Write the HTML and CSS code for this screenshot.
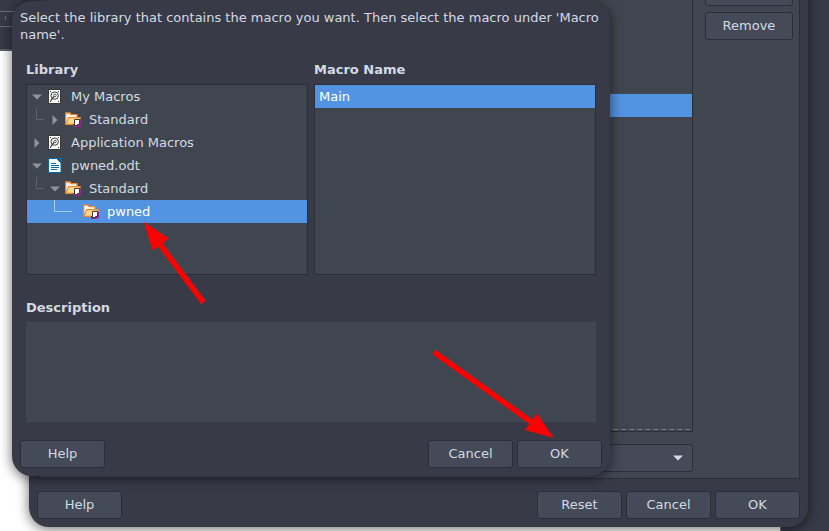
FILE: index.html
```html
<!DOCTYPE html>
<html lang="en">
<head>
<meta charset="utf-8">
<title>Macro Selector</title>
<link rel="stylesheet" href="styles.css">
</head>
<body>
<svg class="defs" aria-hidden="true">
  <symbol id="down" viewBox="0 0 10 6"><path d="M0 0.5H10L5 5.5Z" fill="currentColor"/></symbol>
  <symbol id="right" viewBox="0 0 6 10"><path d="M0.5 0V10L5.5 5Z" fill="currentColor"/></symbol>
  <symbol id="container" viewBox="0 0 14 15">
    <rect x=".5" y=".5" width="12" height="14" fill="#fafafa" stroke="#3a3a38"/>
    <path d="M2 2h1v1H2zM10 2h1v1h-1zM2 12h1v1H2zM10 12h1v1h-1z" fill="#3a3a38"/>
    <circle cx="6.700" cy="6.600" r="3.700" fill="none" stroke="#3a3a38"/>
    <circle cx="7" cy="6.400" r="1.300" fill="none" stroke="#3a3a38" stroke-width=".8"/>
    <path d="M6 7.500L2.500 11.800" stroke="#3a3a38" stroke-width="1.200"/>
  </symbol>
  <symbol id="library" viewBox="0 0 16 15">
    <path d="M.7 12V1h4.200l1 1.600H12v3" fill="#fff" stroke="#ed8733" stroke-width="1.300"/>
    <path d="M.9 12.400L3.600 5.600H15.300L13 12.400Z" fill="#f8db8f" stroke="#ed8733" stroke-width="1.200"/>
    <path d="M8 12H14V8H16V14H14V15H8Z" fill="#92278f"/>
    <path d="M9.500 7.500h5v5h-2v1h-3z" fill="#fff" stroke="#3a3a38"/>
  </symbol>
  <symbol id="document" viewBox="0 0 14 15">
    <path d="M.5 .5H8.500L13 5V14.500H.5Z" fill="#fff" stroke="#0369a3"/>
    <path d="M9 0H14V5Z" fill="#0369a3"/>
    <path d="M3 5.500H8M3 7.500H11M3 9.500H11M3 11.500H9" stroke="#0369a3"/>
  </symbol>
</svg>

<div class="desktop">
  <header class="app-bar"><div class="ruler"></div></header>
  <div class="page"></div>
</div>

<section class="window customize" aria-label="Customize">
  <div class="panel">
    <div class="assignments">
      <div class="event-list"><div class="event-selected"></div><div class="drop-line"></div></div>
      <div class="combo-wrap">
        <select class="combo" aria-label="Save in"><option></option></select>
        <svg class="down" aria-hidden="true"><use href="#down"/></svg>
      </div>
    </div>
    <div class="side">
      <button class="btn" aria-label="Macro"></button>
      <button class="btn">Remove</button>
    </div>
  </div>
  <footer class="actions">
    <button class="btn">Help</button>
    <span class="spacer"></span>
    <button class="btn">Reset</button>
    <button class="btn">Cancel</button>
    <button class="btn">OK</button>
  </footer>
</section>

<section class="window selector" role="dialog" aria-label="Macro Selector">
  <p class="intro">Select the library that contains the macro you want. Then select the macro under 'Macro name'.</p>
  <div class="lists">
    <div class="field">
      <h2 id="lib">Library</h2>
      <ul class="list" role="tree" aria-labelledby="lib">
        <li class="row" role="treeitem"><span class="slot"><svg class="down"><use href="#down"/></svg></span><span class="slot"><svg class="container"><use href="#container"/></svg></span><span class="name">My Macros</span></li>
        <li class="row" role="treeitem"><span class="slot guide"></span><span class="slot"><svg class="right"><use href="#right"/></svg></span><span class="slot"><svg class="library"><use href="#library"/></svg></span><span class="name">Standard</span></li>
        <li class="row" role="treeitem"><span class="slot"><svg class="right"><use href="#right"/></svg></span><span class="slot"><svg class="container"><use href="#container"/></svg></span><span class="name">Application Macros</span></li>
        <li class="row" role="treeitem"><span class="slot"><svg class="down"><use href="#down"/></svg></span><span class="slot"><svg class="document"><use href="#document"/></svg></span><span class="name">pwned.odt</span></li>
        <li class="row" role="treeitem"><span class="slot guide"></span><span class="slot"><svg class="down"><use href="#down"/></svg></span><span class="slot"><svg class="library"><use href="#library"/></svg></span><span class="name">Standard</span></li>
        <li class="row selected" role="treeitem" aria-selected="true"><span class="slot"></span><span class="slot guide long"></span><span class="slot"></span><span class="slot"><svg class="library"><use href="#library"/></svg></span><span class="name">pwned</span></li>
      </ul>
    </div>
    <div class="field">
      <h2 id="mac">Macro Name</h2>
      <ul class="list" role="listbox" aria-labelledby="mac">
        <li class="row selected plain" role="option" aria-selected="true">Main</li>
      </ul>
    </div>
  </div>
  <div class="description">
    <label for="desc">Description</label>
    <textarea id="desc" readonly></textarea>
  </div>
  <footer class="actions">
    <button class="btn">Help</button>
    <span class="spacer"></span>
    <button class="btn">Cancel</button>
    <button class="btn">OK</button>
  </footer>
</section>

<svg class="arrows" aria-hidden="true">
  <path d="M203.500 302.500L159 243M434 352L532 422.500" stroke="#f00" stroke-width="5.500"/>
  <path d="M144 222L169 238.500L152.500 250.500ZM554 438L537 413.500L525 430Z" fill="#f00"/>
</svg>
</body>
</html>
```
FILE: styles.css
```css
* { box-sizing: border-box; }

:root {
  --bg: #383a48;
  --base: #404650;
  --button: #444a58;
  --line: #2b2d39;
  --accent: #5294e2;
  --text: #d3dae3;
}

body {
  margin: 0;
  height: 100vh;
  overflow: hidden;
  position: relative;
  background: var(--bg);
  color: var(--text);
  font: 13px/17px "DejaVu Sans", sans-serif;
}

.defs { position: absolute; width: 0; height: 0; }

.desktop {
  height: 100%;
  padding-right: 48px;
  display: flex;
  flex-direction: column;
}

.app-bar {
  height: 51px;
  padding-top: 11px;
  border-bottom: 2px solid #5c5e69;
}

.ruler {
  height: 16px;
  border: 1px solid #6c6e79;
  border-width: 1px 0;
  background: linear-gradient(#6c6e79, #6c6e79) 5px 4px / 1px 4px no-repeat;
}

.page {
  flex: 1;
  border-right: 1px solid #777;
  background: #fff;
}

.window {
  position: absolute;
  display: flex;
  flex-direction: column;
  background: var(--bg);
  border-radius: 20px;
  box-shadow: 0 2px 12px 1px rgba(0, 0, 0, .5);
}

.customize {
  inset: -31px 21px 4px 29px;
  padding: 8px;
}

.selector {
  top: 1px;
  left: 12px;
  right: 219px;
  padding: 8px;
}

.btn {
  min-width: 85px;
  height: 28px;
  padding: 0 0 2px;
  border: 1px solid var(--line);
  border-radius: 3px;
  background: var(--button);
  color: var(--text);
  font: inherit;
}

.actions { display: flex; gap: 4px; }
.spacer { flex: 1; }

/* Customize window */
.panel {
  flex: 1;
  display: flex;
  gap: 12px;
  margin-bottom: 12px;
  padding: 0 6px 6px;
  border: 1px solid var(--line);
  background: var(--base);
}

.assignments {
  flex: 1;
  display: flex;
  flex-direction: column;
  gap: 12px;
}

.event-list {
  flex: 1;
  display: flex;
  flex-direction: column;
  justify-content: space-between;
  padding-top: 115px;
  border: 1px solid var(--line);
}

.event-selected { height: 23px; background: var(--accent); }

.drop-line {
  height: 1px;
  margin-bottom: 1px;
  background: repeating-linear-gradient(90deg, #777a84 0 5px, transparent 5px 8px);
}

.combo-wrap { display: grid; align-items: center; }

.combo,
.combo-wrap .down { grid-area: 1 / 1; }

.combo-wrap .down {
  justify-self: end;
  margin-right: 10px;
  pointer-events: none;
}

.combo {
  height: 28px;
  appearance: none;
  border: 1px solid var(--line);
  border-radius: 3px;
  background: var(--button);
}

.side {
  width: 88px;
  display: flex;
  flex-direction: column;
  gap: 6px;
}

/* Macro selector */
.intro { margin: 0; }

.lists {
  display: flex;
  gap: 6px;
  margin: 18px 6px 24px;
}

.field { flex: 1; }

h2, label {
  display: block;
  margin: 0 0 6px;
  font-size: 13px;
  line-height: 17px;
  font-weight: bold;
}

.list {
  min-height: 191px;
  margin: 0;
  padding: 0;
  border: 1px solid var(--line);
  background: var(--base);
  list-style: none;
}

.row {
  height: 23px;
  padding-left: 1px;
  display: flex;
  align-items: center;
}

.plain { padding-left: 4px; }
.selected { background: var(--accent); color: #fff; }

.slot {
  width: 18px;
  display: flex;
  justify-content: center;
  color: #8d929d;
}

.name { margin-left: 7px; }

.guide {
  width: 8px;
  height: 12px;
  margin: 0 2px 0 8px;
  align-self: flex-start;
  border: 1px solid #5b606b;
  border-width: 0 0 1px 1px;
}

.long {
  width: 18px;
  margin-right: -8px;
  border-color: #a9caf1;
}

.down { width: 10px; height: 6px; }
.right { width: 6px; height: 10px; }
.container { width: 14px; height: 15px; }
.library { width: 16px; height: 15px; }
.document { width: 14px; height: 15px; }

.description { margin: 0 6px 18px; }

textarea {
  display: block;
  width: 100%;
  height: 100px;
  border: 0;
  background: var(--base);
  color: inherit;
  font: inherit;
  resize: none;
}

.arrows {
  position: absolute;
  inset: 0;
  width: 100%;
  height: 100%;
  pointer-events: none;
}
```
